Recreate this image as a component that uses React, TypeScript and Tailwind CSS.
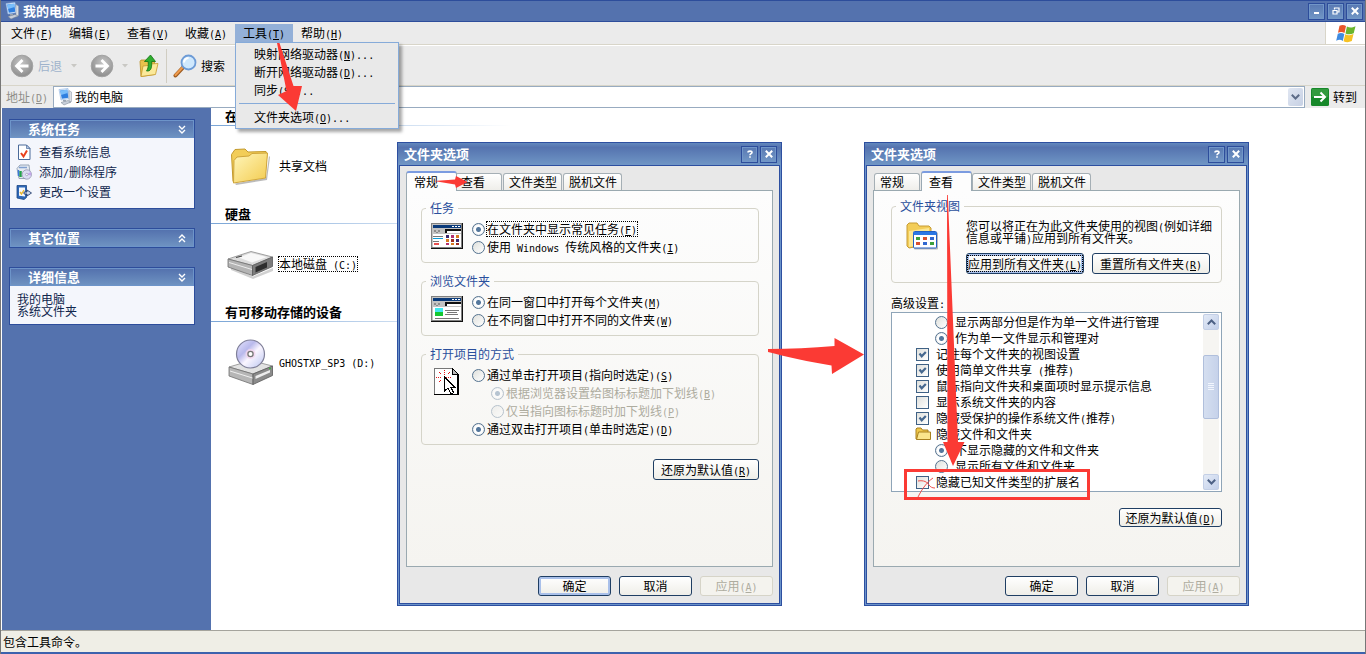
import { useId, type ReactNode } from "react";

/* Renders mixed text: Latin runs in half-width mono, "&X" marks an access key. */
function T({ s }: { s: string }) {
  const runs = s.match(/[\x20-\x7e]+|[^\x20-\x7e]+/g) ?? [];
  return (
    <span className="whitespace-pre">
      {runs.map((run, i) =>
        run.charCodeAt(0) > 126 ? (
          run
        ) : (
          <span key={i} className="font-['DejaVu_Sans_Mono',monospace] text-[10px] leading-[0]">
            {run.split(/(&.)/).map((p, j) =>
              p.startsWith("&") ? (
                <span key={j} className="underline underline-offset-1">
                  {p[1]}
                </span>
              ) : (
                p
              ),
            )}
          </span>
        ),
      )}
    </span>
  );
}

/* ---------- icons ---------- */

function ComputerIcon() {
  return (
    <svg viewBox="0 0 16 18" className="h-[18px] w-4 shrink-0" aria-hidden="true">
      <path d="M2 1.5 11 .5l1.500 10L4 12z" fill="#dceafb" stroke="#8fb4e0" strokeWidth=".6" />
      <path d="M3.200 2.500 10.200 1.700l1.200 8L4.800 10.800z" fill="#2f7fe0" />
      <path d="M3.200 2.500 10.200 1.700l.5 3.300L4 7z" fill="#79bdfa" />
      <path d="M12 2.500 14.500 4v9.500L12 15z" fill="#d9dde3" stroke="#8a95a5" strokeWidth=".5" />
      <path d="M4 14.500 11 12.500l3 1.500-7 3z" fill="#c9d0da" stroke="#77828f" strokeWidth=".5" />
      <path d="M6 12h3v1.500H6z" fill="#9aa5b3" />
    </svg>
  );
}

function NavCircle({ flip }: { flip?: boolean }) {
  return (
    <svg viewBox="0 0 24 24" className={flip ? "size-6 -scale-x-100" : "size-6"} aria-hidden="true">
      <defs>
        <radialGradient id={flip ? "nf" : "nb"} cx="45%" cy="35%" r="65%">
          <stop offset="0" stopColor="#c6c6c6" />
          <stop offset="1" stopColor="#8d8d8d" />
        </radialGradient>
      </defs>
      <circle cx="12" cy="12" r="10.800" fill={flip ? "url(#nf)" : "url(#nb)"} stroke="#a3a3a3" />
      <path d="M18.500 12H7.500M12.500 6 6.500 12l6 6" fill="none" stroke="#fff" strokeWidth="2.800" />
    </svg>
  );
}

function FolderUpIcon() {
  return (
    <svg viewBox="0 0 22 24" className="h-6 w-[22px]" aria-hidden="true">
      <path d="M2 7.500 3 6h5l1.500 2 7-.5v13L3 22.500z" fill="#e9c24c" stroke="#b98d22" strokeWidth=".8" />
      <path d="M3 22.500 5 12l5-.5 1.500-1.500L20 9.500l-2.500 11z" fill="#fbe99a" stroke="#c79a2c" strokeWidth=".8" />
      <path d="M8.500 17c4 .5 5.500-2 5.200-9.500h3.800L12.500 1 6.500 7.500h3.700c.3 4.500 0 7-1.700 9.500z" fill="#2fae2f" stroke="#127412" strokeWidth=".8" />
    </svg>
  );
}

function SearchIcon() {
  return (
    <svg viewBox="0 0 24 24" className="size-6" aria-hidden="true">
      <path d="M10.500 13 2.500 21.500" stroke="#9b5a20" strokeWidth="4" strokeLinecap="round" />
      <path d="M10 13 2.500 21" stroke="#ee9a4c" strokeWidth="2.200" strokeLinecap="round" />
      <circle cx="15.500" cy="8.500" r="7" fill="#cfe8fd" stroke="#6d9bd6" strokeWidth="1.800" />
      <path d="M11 8.500a4.500 4.500 0 0 1 4.500-4.500" stroke="#fff" strokeWidth="2" fill="none" />
    </svg>
  );
}

function WindowsLogo() {
  return (
    <svg viewBox="0 0 20 19" className="h-[19px] w-5" aria-hidden="true">
      <path d="M3.500 1.800C6 .4 8 .8 10 2L8.500 9C6.500 7.800 4.500 7.500 2 8.800z" fill="#e8562a" />
      <path d="M10.900 2.500c2.600 1.200 5 1.400 8.600-.3l-1.800 7c-3 1.400-5.500 1.400-8.200.2z" fill="#6ab52c" />
      <path d="M1.800 9.700c2.700-1.300 4.600-.9 6.500.2l-1.500 7C4.800 15.600 3 15.400.2 16.700z" fill="#3f8be0" />
      <path d="M9.200 10.300c2.800 1.200 5.300 1.200 8.300-.2l-1.700 7c-3.200 1.500-5.600 1.300-8.200.1z" fill="#f6c224" />
    </svg>
  );
}

function DocCheckIcon() {
  return (
    <svg viewBox="0 0 16 16" className="size-4" aria-hidden="true">
      <path d="M2.500 1h8L14 4.500V15.500H2.500z" fill="#fff" stroke="#4a6a9a" />
      <path d="M10.500 1v3.500H14z" fill="#b8cbe8" stroke="#4a6a9a" strokeWidth=".7" />
      <path d="m5 9 2.500 3.500L11 6.500" fill="none" stroke="#e8401c" strokeWidth="2" />
    </svg>
  );
}

function ProgramsIcon() {
  return (
    <svg viewBox="0 0 16 16" className="size-4" aria-hidden="true">
      <path d="M1 4.500 4 1h9l1 8-3 5.500H3z" fill="#e6ebf2" stroke="#8293a8" strokeWidth=".8" />
      <path d="M3 3.500h8" stroke="#7f9fd0" strokeWidth="1.500" />
      <path d="M4.500 7v6" stroke="#24a24a" strokeWidth="2.500" />
      <path d="M2.500 6v6" stroke="#3a78d8" strokeWidth="1.500" />
      <circle cx="10.800" cy="10.500" r="4.700" fill="#dcdcf4" stroke="#8a8aa8" strokeWidth=".7" />
      <path d="M10.800 10.500 14.500 8a4.500 4.500 0 0 1 .6 3.500z" fill="#c3a6ea" />
      <circle cx="10.800" cy="10.500" r="1.200" fill="#fff" stroke="#8a8aa8" strokeWidth=".6" />
    </svg>
  );
}

function SettingIcon() {
  return (
    <svg viewBox="0 0 16 16" className="size-4" aria-hidden="true">
      <path d="M1 1.500h9.500v12L8 15.500 1 14z" fill="#2d67b8" stroke="#1c4684" strokeWidth=".8" />
      <path d="M3 3.500h6v9l-6-.8z" fill="#f4f7fc" />
      <path d="m4 8 1.500 2L8 6" fill="none" stroke="#e8b62c" strokeWidth="1.400" />
      <path d="M8 8h3V6l4.500 3L11 12v-2H8z" fill="#cfdcf0" stroke="#27406e" strokeWidth=".9" />
    </svg>
  );
}

function BigFolderIcon() {
  return (
    <svg viewBox="0 0 48 48" className="size-12" aria-hidden="true">
      <defs>
        <linearGradient id="bf" x1="0" y1="0" x2="1" y2="1">
          <stop offset="0" stopColor="#fff6bb" />
          <stop offset="1" stopColor="#f3cb4e" />
        </linearGradient>
      </defs>
      <path d="M8 41.500 39 36l3-22 1 1-3 23-31 5z" fill="#777" opacity=".5" />
      <path d="M4.500 12.500 8 7.500 18 7l3 3 18-.5 1 3-2.500 22L6 39.500z" fill="#f2cd58" stroke="#c39a2e" />
      <path d="M6.500 41 7 18.500l3-3.500 12-1 3-2.500 15.500-.5-2 25z" fill="url(#bf)" stroke="#cfa53a" />
    </svg>
  );
}

function DriveIcon() {
  return (
    <svg viewBox="0 0 48 30" className="h-[30px] w-12" aria-hidden="true">
      <path d="M4 18 26 27.500 46 19v3L26 30 4 21z" fill="#000" opacity=".18" />
      <path d="M1 10 24 2.500 45.500 8 25.500 16.500z" fill="#dcdcdc" stroke="#8c8c8c" strokeWidth=".8" />
      <path d="M12 8.500 24 4l16 4-15 5.500z" fill="#f8f8f8" />
      <path d="M1 10 25.500 16.500V26.500L1 18z" fill="#b4b4b4" stroke="#6e6e6e" strokeWidth=".8" />
      <path d="M25.500 16.500 45.500 8v9.500l-20 9z" fill="#7c7c7c" stroke="#5a5a5a" strokeWidth=".8" />
      <path d="M28.500 18 40 13v5.500l-11.500 5z" fill="#2e2e2e" />
      <path d="M2 13.500 25 20.500" stroke="#ececec" />
      <path d="M9 8.500 15 7" stroke="#444" strokeWidth="1.200" />
    </svg>
  );
}

function CdDriveIcon() {
  return (
    <svg viewBox="0 0 48 48" className="size-12" aria-hidden="true">
      <defs>
        <linearGradient id="cd" x1="0" y1="0" x2="1" y2="1">
          <stop offset="0" stopColor="#e9e9ff" />
          <stop offset=".35" stopColor="#b9b9ec" />
          <stop offset=".55" stopColor="#fbf6ff" />
          <stop offset="1" stopColor="#b8c4f0" />
        </linearGradient>
      </defs>
      <path d="M2 29 24 22.500 45.500 28 26 36z" fill="#e2e2e2" stroke="#8c8c8c" strokeWidth=".8" />
      <path d="M2 29 26 36v10.500L2 38z" fill="#b6b6b6" stroke="#6e6e6e" strokeWidth=".8" />
      <path d="M26 36 45.500 28v9.500L26 46.500z" fill="#8b8b8b" stroke="#5a5a5a" strokeWidth=".8" />
      <path d="M28.500 38 43 32v2.500L28.500 41z" fill="#ededed" />
      <path d="M3 33 25.500 40" stroke="#efefef" />
      <path d="M42 30.500h2" stroke="#3db03d" strokeWidth="1.500" />
      <circle cx="23.500" cy="16" r="14" fill="url(#cd)" stroke="#7f7f98" strokeWidth="1.200" />
      <circle cx="23.500" cy="16" r="5" fill="#f2d4ec" opacity=".8" />
      <circle cx="23.500" cy="16" r="2.600" fill="#fff" stroke="#777" strokeWidth="1.300" />
    </svg>
  );
}

function MiniWindow({ kind }: { kind: "tasks" | "browse" }) {
  return (
    <svg viewBox="0 0 32 26" className="h-[26px] w-8 shrink-0" shapeRendering="crispEdges" aria-hidden="true">
      <path d="M0 0h32v26H0z" fill="#111" />
      <path d="M0 0h31v25H0z" fill="#808080" />
      <path d="M1 1h29v23H1z" fill="#c3c3c3" />
      <path d="M2 2h28v3H2z" fill="#0a3a7a" />
      <path d="M21 3h2v1h-2zM24 3h2v1h-2zM27 3h2v1h-2z" fill="#fff" />
      <path d="M3 7h2v2H3zM7 7h2v2H7zM5 9h2v1H5z" fill="#8c8c8c" />
      <path d="M14 6h16v4H14z" fill="#111" />
      <path d="M16 8h14v2H16zM2 11h28v13H2z" fill="#fff" />
      {kind === "tasks" ? (
        <>
          <path d="M2 13h10v1H2zM2 18h6v1H2z" fill="#777" />
          <path d="M2 15h10v1H2z" fill="#0c9cd8" />
          <path d="M3 20h5v2H3z" fill="#e85050" />
          <path d="M15 12h3v3h-3zM25 16h3v3h-3z" fill="#3c2870" />
          <path d="M20 12h3v3h-3zM15 20h3v2h-3z" fill="#b43070" />
          <path d="M25 12h3v3h-3zM15 16h3v3h-3zM20 20h3v2h-3z" fill="#d87a20" />
          <path d="M20 16h3v3h-3zM25 20h3v2h-3z" fill="#a02c20" />
        </>
      ) : (
        <>
          <path d="M4 12h8v5H4z" fill="#40e8f0" />
          <path d="M4 16h8v4H4z" fill="#14c832" />
          <path d="M14 14h14v1H14zM16 16h10v1H16zM14 18h13v1H14zM4 22h24v1H4z" fill="#777" />
        </>
      )}
    </svg>
  );
}

function ClickPageIcon() {
  return (
    <svg viewBox="0 0 32 30" className="h-[30px] w-8 shrink-0" shapeRendering="crispEdges" aria-hidden="true">
      <path d="M3 2h18l6 6v21H3z" fill="#fff" />
      <path d="M3.500 28V2.500H21" fill="none" stroke="#777" />
      <path d="M3 28.500h24.500M27 29V8" fill="none" stroke="#000" strokeWidth="1.500" />
      <path d="M21 2v6h6z" fill="#bbb" stroke="#000" />
      <path d="M5 11.500h6M15 11.500h6M13.500 4v5M8 6l3 3M19 6l-3 3M8 16l3-3" stroke="#e81818" strokeDasharray="1 1" />
      <path d="M13.500 11v14l3.500-3 3 6 2.500-1.500-2.500-5h4z" fill="#fff" stroke="#000" />
    </svg>
  );
}

function FolderViewIcon() {
  return (
    <svg viewBox="0 0 32 30" className="h-[30px] w-8 shrink-0" aria-hidden="true">
      <path d="M1 3 3 1h8l2 3h10l2 2v16L3 26 1 24z" fill="#f3cd58" stroke="#c79c34" />
      <path d="M3 9 23 6v15L3 25z" fill="#fbe795" />
      <rect x="8" y="10.500" width="24" height="17" rx="1" fill="#555" opacity=".4" />
      <rect x="7.500" y="9.500" width="23" height="16.500" rx="1" fill="#fff" stroke="#2260c4" />
      <path d="M7.500 10h23v3h-23z" fill="#2b78e4" />
      <path d="M10 15h4v3h-4zM24 20h4v3h-4z" fill="#3ca03c" />
      <path d="M17 15h4v3h-4zM10 20h4v3h-4z" fill="#d85030" />
      <path d="M24 15h4v3h-4zM17 20h4v3h-4z" fill="#3068d0" />
    </svg>
  );
}

function SmallFolderIcon() {
  return (
    <svg viewBox="0 0 16 14" className="h-[14px] w-4" aria-hidden="true">
      <path d="M1 12V2l1-1h4l1.500 2H13v9z" fill="#f0c84a" stroke="#a8801f" />
      <path d="M1.500 12.500 3.500 5H15.500v7.500z" fill="#fbe68c" stroke="#a8801f" />
    </svg>
  );
}

/* ---------- controls ---------- */

function CaptionButton({ label, children }: { label: string; children: ReactNode }) {
  return (
    <button
      aria-label={label}
      className="grid size-[17px] place-items-center border border-[#2d4d9b] bg-linear-to-b from-[#5878b2] to-[#7297c6] text-white shadow-[inset_0_0_0_1px_#7196c8]"
    >
      {children}
    </button>
  );
}

const CloseGlyph = () => (
  <svg viewBox="0 0 8 8" className="size-2" aria-hidden="true">
    <path d="m.8.8 6.400 6.400M7.200.8.8 7.200" stroke="#fff" strokeWidth="2" />
  </svg>
);

const HelpGlyph = () => (
  <svg viewBox="0 0 8 8" className="size-2" aria-hidden="true">
    <path d="M2 2.500C2 .6 6 .6 6 2.500 6 3.800 4 3.600 4 5.300M4 6.200V7.800" fill="none" stroke="#fff" strokeWidth="1.600" />
  </svg>
);

function Radio({
  name,
  label,
  checked,
  disabled,
  focus,
}: {
  name: string;
  label: string;
  checked?: boolean;
  disabled?: boolean;
  focus?: boolean;
}) {
  const id = useId();
  return (
    <div className="flex h-[18px] items-center gap-0.5">
      <RadioDot id={id} name={name} checked={checked} disabled={disabled} />
      <label
        htmlFor={id}
        className={
          disabled ? "text-[#aeac9f]" : focus ? "leading-[14px] outline-1 outline-dotted outline-black" : "text-black"
        }
      >
        <T s={label} />
      </label>
    </div>
  );
}

function RadioDot({ id, name, checked, disabled }: { id: string; name: string; checked?: boolean; disabled?: boolean }) {
  return (
    <input
      id={id}
      name={name}
      type="radio"
      defaultChecked={checked}
      disabled={disabled}
      className="size-[13px] shrink-0 appearance-none rounded-full border border-[#54728f] bg-linear-to-br from-[#dfe0dc] to-white checked:bg-[radial-gradient(circle,#54779c_0_2px,#fff_3px_4px,#dfe4e8_6px)] disabled:opacity-40"
    />
  );
}

function PushButton({ label, className, variant = "normal" }: { label: string; className: string; variant?: "normal" | "default" | "disabled" | "focus" }) {
  const look =
    variant === "disabled"
      ? "border-[#d6d4c8] bg-[#f4f3ee] text-[#aeac9f]"
      : variant === "normal"
        ? "border-[#1f3e63] bg-linear-to-b from-white to-[#efeee8]"
        : "border-[#1f3e63] bg-linear-to-b from-white to-[#efeee8] shadow-[inset_0_0_0_2px_#a9c0ea]";
  return (
    <button
      disabled={variant === "disabled"}
      className={`flex items-center justify-center rounded-[3px] border leading-4 ${look} ${className}`}
    >
      {variant === "focus" ? (
        <span className="leading-[15px] outline-1 outline-dotted outline-black">
          <T s={label} />
        </span>
      ) : (
        <T s={label} />
      )}
    </button>
  );
}

function GroupBox({ title, className, children }: { title: string; className: string; children: ReactNode }) {
  return (
    <fieldset className={`rounded border border-[#d5d4c9] ${className}`}>
      <legend className="-ml-[5px] px-1 leading-4 text-[#2a4f9c]">{title}</legend>
      {children}
    </fieldset>
  );
}

function Dialog({
  className,
  active,
  defaultOk,
  panelClass,
  children,
}: {
  className: string;
  active: string;
  defaultOk?: boolean;
  panelClass: string;
  children: ReactNode;
}) {
  const tabs = ["常规", "查看", "文件类型", "脱机文件"];
  return (
    <section
      role="dialog"
      aria-label="文件夹选项"
      className={`absolute flex h-[464px] w-[385px] flex-col border border-[#2d4fa0] bg-[#6b93c9] ${className}`}
    >
      <header className="flex h-[22px] items-center gap-0.5 bg-linear-to-b from-[#6288bd] via-[#5573af] via-20% to-[#7096c5] pr-1 pl-[6px]">
        <h2 className="flex-1 text-[13px] leading-4 font-bold text-white">文件夹选项</h2>
        <CaptionButton label="帮助">
          <HelpGlyph />
        </CaptionButton>
        <CaptionButton label="关闭">
          <CloseGlyph />
        </CaptionButton>
      </header>
      <div className="mx-px mb-px flex flex-1 flex-col border border-[#2d4fa0] bg-[#e8e8e8] px-[6px] pt-[5px] pb-[7px]">
        <div role="tablist" className="flex h-[19px] items-end">
          {tabs.map((tab) => (
            <button
              key={tab}
              role="tab"
              aria-selected={tab === active}
              className={
                tab === active
                  ? "z-10 -mb-px h-5 w-[51px] rounded-t-[3px] border border-t-2 border-b-0 border-[#9aa9b4] border-t-[#7b9be0] bg-[#fdfdfd] pl-[7px] text-left leading-4"
                  : `mr-px h-[17px] rounded-t-[3px] border border-b-0 border-[#a5afb5] bg-linear-to-b from-white to-[#efeeea] pl-[5px] text-left leading-4 whitespace-nowrap ${
                      tab.length > 2 ? "w-[59px]" : tab === "常规" ? "-mr-px ml-px w-[46px]" : "-ml-0.5 w-[47px]"
                    }`
              }
            >
              {tab}
            </button>
          ))}
        </div>
        <div
          className={`flex-1 border border-[#9aa9b0] bg-linear-to-b from-[#fdfdfd] to-[#f5f4f0] ${panelClass}`}
        >
          {children}
        </div>
        <footer className="flex justify-end gap-2 pt-[9px]">
          <PushButton label="确定" variant={defaultOk ? "default" : "normal"} className="h-5 w-[73px]" />
          <PushButton label="取消" className="h-5 w-[73px]" />
          <PushButton label="应用(&A)" variant="disabled" className="h-5 w-[73px]" />
        </footer>
      </div>
    </section>
  );
}

function GeneralDialog() {
  return (
    <Dialog className="top-[142px] left-[396px]" active="常规" defaultOk panelClass="pt-[9px] pr-[13px] pl-[14px]">
      <div className="flex flex-col gap-[10px]">
        <GroupBox title="任务" className="pb-[6px] pl-[9px]">
          <div className="flex gap-[9px] pt-1">
            <div className="pt-[3px]">
              <MiniWindow kind="tasks" />
            </div>
            <div>
              <Radio name="tasks" label="在文件夹中显示常见任务(&F)" checked focus />
              <Radio name="tasks" label="使用 Windows 传统风格的文件夹(&I)" />
            </div>
          </div>
        </GroupBox>
        <GroupBox title="浏览文件夹" className="pb-[6px] pl-[9px]">
          <div className="flex gap-[9px] pt-1">
            <div className="pt-[3px]">
              <MiniWindow kind="browse" />
            </div>
            <div>
              <Radio name="browse" label="在同一窗口中打开每个文件夹(&M)" checked />
              <Radio name="browse" label="在不同窗口中打开不同的文件夹(&W)" />
            </div>
          </div>
        </GroupBox>
        <GroupBox title="打开项目的方式" className="pb-[6px] pl-[9px]">
          <div className="flex gap-[9px] pt-1">
            <ClickPageIcon />
            <div>
              <Radio name="open" label="通过单击打开项目(指向时选定)(&S)" />
              <div className="pl-[19px]">
                <Radio name="underline" label="根据浏览器设置给图标标题加下划线(&B)" checked disabled />
                <Radio name="underline" label="仅当指向图标标题时加下划线(&P)" disabled />
              </div>
              <Radio name="open" label="通过双击打开项目(单击时选定)(&D)" checked />
            </div>
          </div>
        </GroupBox>
      </div>
      <div className="flex justify-end pt-[14px]">
        <PushButton label="还原为默认值(&R)" className="h-[21px] w-[106px]" />
      </div>
    </Dialog>
  );
}

type Option = { kind: "radio" | "check" | "folder"; label: string; on?: boolean; group?: string };

const options: Option[] = [
  { kind: "radio", label: "显示两部分但是作为单一文件进行管理", group: "pair" },
  { kind: "radio", label: "作为单一文件显示和管理对", on: true, group: "pair" },
  { kind: "check", label: "记住每个文件夹的视图设置", on: true },
  { kind: "check", label: "使用简单文件共享 (推荐)", on: true },
  { kind: "check", label: "鼠标指向文件夹和桌面项时显示提示信息", on: true },
  { kind: "check", label: "显示系统文件夹的内容" },
  { kind: "check", label: "隐藏受保护的操作系统文件(推荐)", on: true },
  { kind: "folder", label: "隐藏文件和文件夹" },
  { kind: "radio", label: "不显示隐藏的文件和文件夹", on: true, group: "hidden" },
  { kind: "radio", label: "显示所有文件和文件夹", group: "hidden" },
  { kind: "check", label: "隐藏已知文件类型的扩展名" },
];

function OptionRow({ kind, label, on, group }: Option) {
  const id = useId();
  if (kind === "folder") {
    return (
      <li className="flex h-4 items-center gap-[5px] pl-[23px]">
        <SmallFolderIcon />
        <T s={label} />
      </li>
    );
  }
  return (
    <li className={kind === "radio" ? "flex h-4 items-center gap-[7px] pl-[43px]" : "flex h-4 items-center gap-[7px] pl-6"}>
      {kind === "radio" ? (
        <RadioDot id={id} name={group ?? ""} checked={on} />
      ) : (
        <span className="grid">
          <input
            id={id}
            type="checkbox"
            defaultChecked={on}
            className="peer size-[13px] appearance-none border border-[#3f6185] bg-linear-to-br from-[#dfe0dc] to-white [grid-area:1/1]"
          />
          <svg viewBox="0 0 13 13" className="pointer-events-none invisible size-[13px] [grid-area:1/1] peer-checked:visible" aria-hidden="true">
            <path d="m3.500 5.500 2.200 2.800L9.800 4" fill="none" stroke="#46688f" strokeWidth="2.200" />
          </svg>
        </span>
      )}
      <label htmlFor={id}>
        <T s={label} />
      </label>
    </li>
  );
}

function ScrollArrow({ down }: { down?: boolean }) {
  return (
    <button
      aria-label={down ? "向下滚动" : "向上滚动"}
      className="grid size-4 place-items-center rounded-xs border border-[#c3cfe6] bg-linear-to-br from-[#e3eaf6] to-[#c3d0ea]"
    >
      <svg viewBox="0 0 9 6" className={down ? "h-[6px] w-[9px]" : "h-[6px] w-[9px] rotate-180"} aria-hidden="true">
        <path d="m.8.8 3.700 3.700L8.200.8" fill="none" stroke="#4d6185" strokeWidth="2" />
      </svg>
    </button>
  );
}

function ViewDialog() {
  return (
    <Dialog className="top-[142px] left-[863px]" active="查看" panelClass="pt-[7px] pr-[17px] pl-[17px]">
      <GroupBox title="文件夹视图" className="pr-[9px] pb-2 pl-[9px]">
        <div className="flex gap-[28px] pt-[6px] pl-[5px]">
          <div className="pt-0.5">
            <FolderViewIcon />
          </div>
          <div className="flex-1">
            <p className="leading-3">
              <T s={"您可以将正在为此文件夹使用的视图(例如详细"} />
              <br />
              <T s={"信息或平铺)应用到所有文件夹。"} />
            </p>
            <div className="flex gap-2 pt-[9px]">
              <PushButton label="应用到所有文件夹(&L)" variant="focus" className="h-[21px] w-[118px]" />
              <PushButton label="重置所有文件夹(&R)" className="h-[21px] w-[118px]" />
            </div>
          </div>
        </div>
      </GroupBox>
      <p className="pt-[14px] pb-[3px] leading-3">
        <T s="高级设置:" />
      </p>
      <div className="flex h-[180px] border border-[#8fa5b8] bg-white py-px pr-0.5">
        <ul className="flex-1">
          {options.map((o) => (
            <OptionRow key={o.label} {...o} />
          ))}
        </ul>
        <div className="flex flex-col bg-[#f6f5f2]">
          <ScrollArrow />
          <div className="flex-1 pt-[25px]">
            <div className="grid h-16 w-4 place-items-center rounded-xs border border-[#b0bfdc] bg-linear-to-r from-[#d5dff0] to-[#c6d2ea]">
              <svg viewBox="0 0 6 8" className="h-2 w-[6px]" aria-hidden="true">
                <path d="M0 .5h6M0 2.500h6M0 4.500h6M0 6.500h6" stroke="#f2f6fd" />
              </svg>
            </div>
          </div>
          <ScrollArrow down />
        </div>
      </div>
      <div className="flex justify-end pt-4">
        <PushButton label="还原为默认值(&D)" className="h-[19px] w-[103px]" />
      </div>
    </Dialog>
  );
}

function Chevrons({ up }: { up?: boolean }) {
  return (
    <svg viewBox="0 0 8 9" className={up ? "h-[9px] w-2" : "h-[9px] w-2 rotate-180"} aria-hidden="true">
      <path d="m1 4 3-3 3 3M1 8l3-3 3 3" fill="none" stroke="#fff" strokeWidth="1.400" />
    </svg>
  );
}

function SidePanel({ title, closed, children }: { title: string; closed?: boolean; children?: ReactNode }) {
  return (
    <section className="border border-[#2d4d9b]">
      <h2 className="flex h-[18px] items-center justify-between border border-[#6d94c9] bg-linear-to-b from-[#5472ae] to-[#6e92c1] pr-[7px] pl-[17px] text-[13px] leading-4 font-bold text-white">
        {title}
        <button aria-label={closed ? "展开" : "折叠"}>
          <Chevrons up={closed} />
        </button>
      </h2>
      {children}
    </section>
  );
}

function FileGroup({ title, icon, label, focus }: { title: string; icon: ReactNode; label: string; focus?: boolean }) {
  return (
    <section>
      <h2 className="h-[17px] pl-[14px] text-[13px] leading-4 font-bold">{title}</h2>
      <div className="h-px w-[300px] bg-linear-to-r from-[#7aa5d6] to-white" />
      <div className="flex h-20 items-center gap-1 pl-4">
        {icon}
        <span className={focus ? "leading-[14px] outline-1 outline-dotted outline-black" : "leading-[14px]"}>
          <T s={label} />
        </span>
      </div>
    </section>
  );
}

const menus = ["文件(&F)", "编辑(&E)", "查看(&V)", "收藏(&A)", "工具(&T)", "帮助(&H)"];

function ToolsMenu() {
  const item = "block h-[18px] w-full pl-[18px] text-left leading-[18px] hover:bg-[#93b0d8]";
  return (
    <div
      role="menu"
      className="absolute top-full left-0 z-20 w-[164px] border border-[#86abd9] bg-[#e9e9e9] py-0.5 shadow-[3px_3px_3px_rgba(0,0,0,0.35)]"
    >
      <button role="menuitem" className={item}>
        <T s="映射网络驱动器(&N)..." />
      </button>
      <button role="menuitem" className={item}>
        <T s="断开网络驱动器(&D)..." />
      </button>
      <button role="menuitem" className={item}>
        <T s="同步(&S)..." />
      </button>
      <div role="separator" className="mx-[3px] my-1 h-px bg-[#86abd9]" />
      <button role="menuitem" className={item}>
        <T s="文件夹选项(&O)..." />
      </button>
    </div>
  );
}

const DropMark = () => (
  <svg viewBox="0 0 6 4" className="h-1 w-[6px]" aria-hidden="true">
    <path d="M0 0h6L3 3.500z" fill="#c9c8c4" />
  </svg>
);

function Annotations() {
  return (
    <>
      <svg viewBox="0 0 30 70" className="pointer-events-none absolute top-[42px] left-[274px] z-30 h-[70px] w-[30px]" aria-hidden="true">
        <path d="M2 1h2.500L18.500 44H27l-6 25L3 53l8.500-4z" fill="#fb3a34" />
      </svg>
      <svg viewBox="0 0 34 14" className="pointer-events-none absolute top-[175px] left-[433px] z-30 h-[14px] w-[34px]" aria-hidden="true">
        <path d="M0 6 21 4.500 22 1l11.500 6L22 13l-1-3.500z" fill="#fb3a34" />
      </svg>
      <svg viewBox="0 0 97 40" className="pointer-events-none absolute top-[336px] left-[766px] z-30 h-10 w-[97px]" aria-hidden="true">
        <path d="M1 13c22 0 44-1 66.500-3L67.500 2 97 18.500 65 38l-.5-8.500C42 26 20 21 1 16z" fill="#fb3a34" />
      </svg>
      <svg viewBox="0 0 24 272" className="pointer-events-none absolute top-[195px] left-[941px] z-30 h-[272px] w-6" aria-hidden="true">
        <path d="M5 0h.8L16 247h6.500L11 271 1 247h4.500z" fill="#fb3a34" />
      </svg>
      <svg viewBox="0 0 186 31" className="pointer-events-none absolute top-[469px] left-[903px] z-30 h-[31px] w-[186px]" aria-hidden="true">
        <path d="M1.500 1.500h183v28H1.500z" fill="none" stroke="#fb3a34" strokeWidth="3" />
        <path d="M14 28C18 20 23 13 29 9M14 12c6-1 9 1 11 4 1.500 2 3 3 6 3" fill="none" stroke="#f0504c" />
      </svg>
    </>
  );
}

export default function App() {
  return (
    <div className="relative flex min-h-screen flex-col overflow-hidden border-x border-[#777] bg-white font-['Noto_Sans_CJK_SC',sans-serif] text-[12px] leading-4 text-black">
      <header className="flex h-[22px] items-center gap-[2px] border-y border-[#2d4d9b] bg-[#5472ae] pr-0.5 pl-[3px]">
        <ComputerIcon />
        <h1 className="flex-1 pl-px text-[13px] leading-4 font-bold text-white">我的电脑</h1>
        <CaptionButton label="最小化">
          <svg viewBox="0 0 8 8" className="size-2" aria-hidden="true">
            <path d="M1 6h5" stroke="#fff" strokeWidth="2" />
          </svg>
        </CaptionButton>
        <CaptionButton label="还原">
          <svg viewBox="0 0 8 8" className="size-2" aria-hidden="true">
            <path d="M2.500 2.500V1H7v4H5.500M1 3.500h4V7H1z" fill="none" stroke="#fff" strokeWidth="1.200" />
          </svg>
        </CaptionButton>
        <CaptionButton label="关闭">
          <CloseGlyph />
        </CaptionButton>
      </header>

      <nav className="flex h-6 border-b border-white bg-[#ebebeb]">
        <div className="flex flex-1 items-start border-b border-[#d8d5c9] pt-0.5 pl-0.5">
          {menus.map((m) => (
            <div key={m} className="relative">
              <button
                className={
                  m.startsWith("工具")
                    ? "block h-[18px] w-[58px] bg-[#93b0d8] text-center leading-[18px]"
                    : "block h-[18px] w-[58px] text-center leading-[18px]"
                }
              >
                <T s={m} />
              </button>
              {m.startsWith("工具") && <ToolsMenu />}
            </div>
          ))}
        </div>
        <div className="grid w-10 place-items-center border-b border-l border-[#d8d5c9] bg-white">
          <WindowsLogo />
        </div>
      </nav>

      <div className="flex h-10 items-center border-b border-[#d8d5c9] bg-[#ebebeb] pl-[9px]">
        <button className="flex items-center gap-1 text-[#9fb3cc]">
          <NavCircle />
          后退
        </button>
        <span className="pl-[9px]">
          <DropMark />
        </span>
        <button aria-label="前进" className="ml-[13px]">
          <NavCircle flip />
        </button>
        <span className="pl-2">
          <DropMark />
        </span>
        <button aria-label="向上" className="ml-[10px]">
          <FolderUpIcon />
        </button>
        <span className="ml-[6px] h-[34px] w-px bg-[#d0cdc2]" />
        <button className="ml-[6px] flex items-center gap-1">
          <SearchIcon />
          搜索
        </button>
      </div>

      <div className="flex h-[22px] items-stretch bg-[#ebebeb] pr-2 pl-[5px]">
        <label htmlFor="address" className="w-[47px] leading-[22px] text-[#8f8e88]">
          <T s="地址(&D)" />
        </label>
        <div className="flex flex-1 items-center border border-[#98abc0] bg-white pr-px pl-[3px]">
          <ComputerIcon />
          <input id="address" defaultValue="我的电脑" className="h-4 min-w-0 flex-1 pl-0.5 outline-none" />
          <button
            aria-label="地址列表"
            className="grid h-[18px] w-[15px] place-items-center rounded-xs bg-linear-to-br from-[#e1e7f2] to-[#c6d0e4]"
          >
            <svg viewBox="0 0 9 6" className="h-[6px] w-[9px]" aria-hidden="true">
              <path d="m.8.8 3.700 3.700L8.200.8" fill="none" stroke="#5d6c88" strokeWidth="2" />
            </svg>
          </button>
        </div>
        <button className="flex items-center gap-1 pl-[6px]">
          <svg viewBox="0 0 18 18" className="size-[18px]" aria-hidden="true">
            <rect width="18" height="18" rx="1.500" fill="#17882a" />
            <path d="M1 1h16v8H1z" fill="#45a64c" opacity=".6" />
            <path d="M3 9h11M9.500 4.500 14 9l-4.500 4.500" fill="none" stroke="#fff" strokeWidth="2" />
          </svg>
          转到
        </button>
      </div>

      <main className="flex flex-1 pl-px">
        <aside className="flex w-[209px] shrink-0 flex-col gap-[19px] bg-[#5472ae] pt-[11px] pr-4 pl-[7px] text-[#10264d]">
          <SidePanel title="系统任务">
            <ul className="flex flex-col gap-1 bg-[#f4f6fc] pt-[6px] pb-2 pl-[6px]">
              <li>
                <a href="#info" className="flex items-center gap-[7px]">
                  <DocCheckIcon />
                  查看系统信息
                </a>
              </li>
              <li>
                <a href="#programs" className="flex items-center gap-[7px]">
                  <ProgramsIcon />
                  <T s="添加/删除程序" />
                </a>
              </li>
              <li>
                <a href="#settings" className="flex items-center gap-[7px]">
                  <SettingIcon />
                  更改一个设置
                </a>
              </li>
            </ul>
          </SidePanel>
          <SidePanel title="其它位置" closed />
          <SidePanel title="详细信息">
            <div className="bg-[#f4f6fc] pt-[7px] pb-[7px] pl-[7px] leading-3">
              <p>我的电脑</p>
              <p>系统文件夹</p>
            </div>
          </SidePanel>
        </aside>
        <div className="flex-1">
          <FileGroup title="在" icon={<BigFolderIcon />} label="共享文档" />
          <FileGroup title="硬盘" icon={<DriveIcon />} label="本地磁盘 (C:)" focus />
          <FileGroup title="有可移动存储的设备" icon={<CdDriveIcon />} label="GHOSTXP_SP3 (D:)" />
        </div>
      </main>

      <footer className="h-6 border-t border-b-2 border-t-[#a5a49d] border-b-[#3c62ad] bg-[#efeee6] pl-0.5 leading-[21px]">
        包含工具命令。
      </footer>

      <GeneralDialog />
      <ViewDialog />
      <Annotations />
    </div>
  );
}
